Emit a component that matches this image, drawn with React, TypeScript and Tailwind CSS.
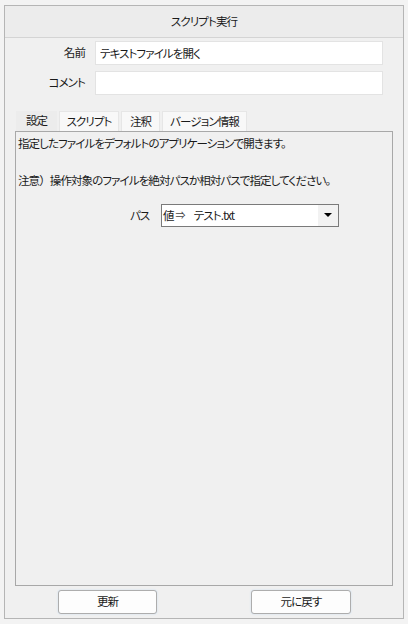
import React from 'react';

const font = { fontFamily: '"Noto Sans CJK JP", "Noto Sans", sans-serif', fontFeatureSettings: '"palt"' };

const tabs = [
  { label: '設定', w: 'w-[41px]' },
  { label: 'スクリプト', w: 'w-[60px]' },
  { label: '注釈', w: 'w-[39px]' },
  { label: 'バージョン情報', w: 'w-[85px]' },
];

export default function App() {
  return (
    <div className="w-[408px] h-[624px] bg-[#f3f3f3] pt-[5px] pl-[4px] text-[11.5px] tracking-[-0.9px] text-[#1a1a1a]" style={font}>
      <div className="w-[400px] h-[614px] border border-[#b5b5b5] bg-[#f0f0f0] flex flex-col">
        <div className="h-[32px] shrink-0 border-b border-[#d4d4d4] bg-[#ececec] flex items-center justify-center">
          スクリプト実行
        </div>

        <div className="mt-[3px] flex flex-col gap-[6px]">
          <div className="flex items-center">
            <div className="w-[80px] text-right">名前</div>
            <input
              className="ml-[10px] w-[288px] h-[24px] bg-white border border-[#e3e3e3] px-[4px] outline-none tracking-[-0.9px]"
              defaultValue="テキストファイルを開く"
              style={font}
            />
          </div>
          <div className="flex items-center">
            <div className="w-[80px] text-right">コメント</div>
            <input
              className="ml-[10px] w-[288px] h-[24px] bg-white border border-[#e3e3e3] px-[4px] outline-none"
              style={font}
            />
          </div>
        </div>

        <div className="mt-[16px] ml-[11px] flex gap-[2px] h-[20px]">
          {tabs.map((t, i) => (
            <div
              key={t.label}
              className={`${t.w} flex items-center justify-center ${
                i === 0 ? 'bg-[#ececec]' : 'bg-[#f8f8f8] border border-b-0 border-[#e6e6e6]'
              }`}
            >
              {t.label}
            </div>
          ))}
        </div>

        <div className="ml-[10px] w-[378px] h-[455px] border border-[#a8a8a8] px-[2px] pt-[2px] leading-[18.5px]">
          <div>指定したファイルをデフォルトのアプリケーションで開きます。</div>
          <div className="h-[18.5px]" />
          <div>
            注意<span style={{ fontFeatureSettings: 'normal' }}>）</span>操作対象のファイルを絶対パスか相対パスで指定してください。
          </div>
          <div className="mt-[14px] flex items-center">
            <div className="ml-[112px] w-[30px]">パス</div>
            <div className="ml-[1px] w-[178px] h-[23px] bg-white border border-[#7a7a7a] flex items-center">
              <span className="pl-[1px]">値</span>
              <span className="ml-[2px] text-[10px] text-[#444]">⇒</span>
              <span className="ml-[9px]">テスト.txt</span>
              <div className="ml-auto w-[20px] h-full bg-[#f2f2f2] flex items-center justify-center">
                <svg width="8" height="4" viewBox="0 0 8 4">
                  <path d="M0 0h8L4 4z" fill="#000" />
                </svg>
              </div>
            </div>
          </div>
        </div>

        <div className="flex mt-[4px]">
          <button className="ml-[53px] w-[99px] h-[24px] rounded-[3px] border border-[#adadad] bg-[#fdfdfd] shadow-[0_0_2px_#c8dcf0]" style={font}>
            更新
          </button>
          <button className="ml-[94px] w-[100px] h-[24px] rounded-[3px] border border-[#adadad] bg-[#fdfdfd] shadow-[0_0_2px_#c8dcf0]" style={font}>
            元に戻す
          </button>
        </div>
      </div>
    </div>
  );
}
